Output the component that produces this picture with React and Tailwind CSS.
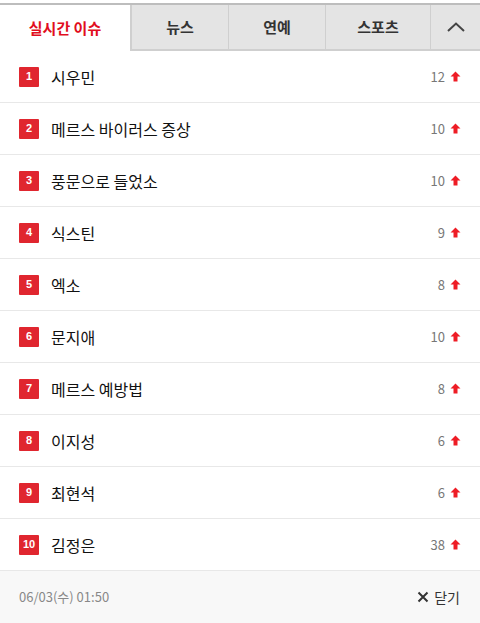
import React from "react";

const items = [
  ["시우민", 12],
  ["메르스 바이러스 증상", 10],
  ["풍문으로 들었소", 10],
  ["식스틴", 9],
  ["엑소", 8],
  ["문지애", 10],
  ["메르스 예방법", 8],
  ["이지성", 6],
  ["최현석", 6],
  ["김정은", 38],
];

const font = { fontFamily: '"Noto Sans CJK KR", "Noto Sans", sans-serif' };

function UpArrow() {
  return (
    <svg width="11" height="11" viewBox="0 0 11 11" className="ml-[5px]">
      <path d="M5.5 0.5 L10.5 5.5 L7.5 5.5 L7.5 10.5 L3.5 10.5 L3.5 5.5 L0.5 5.5 Z" fill="#ee1c25" />
    </svg>
  );
}

export default function App() {
  return (
    <div className="w-[480px] h-[623px] bg-white flex flex-col overflow-hidden" style={font}>
      <div className="pt-[3px] bg-white">
        <div className="flex h-[48px] border-t-2 border-[#bdbdbd]">
          <div className="w-[130px] flex items-center justify-center bg-white text-[#e10d20] text-[15px] font-bold">
            실시간 이슈
          </div>
          <div className="w-[98px] flex items-center justify-center bg-[#e4e4e4] border-l-2 border-b-2 border-[#cfcfcf] text-[#333] text-[15px] font-bold">
            뉴스
          </div>
          <div className="w-[97px] flex items-center justify-center bg-[#e4e4e4] border-l border-b-2 border-[#cfcfcf] text-[#333] text-[15px] font-bold">
            연예
          </div>
          <div className="w-[105px] flex items-center justify-center bg-[#e4e4e4] border-l border-b-2 border-[#cfcfcf] text-[#333] text-[15px] font-bold">
            스포츠
          </div>
          <div className="flex-1 flex items-center justify-center bg-[#e4e4e4] border-l border-b-2 border-[#cfcfcf]">
            <svg width="20" height="12" viewBox="0 0 20 12">
              <path d="M2 10 L10 2.5 L18 10" stroke="#444" strokeWidth="2" fill="none" />
            </svg>
          </div>
        </div>
      </div>
      <div className="flex flex-col">
        {items.map(([name, n], i) => (
          <div key={i} className="h-[52px] flex items-center border-b border-[#e8e8e8] pl-[19px] pr-[19px]">
            <div className="w-[20px] h-[20px] bg-[#e0262f] rounded-[1px] flex items-center justify-center text-white text-[11px] font-bold" style={{ fontFamily: '"Liberation Sans", sans-serif' }}>
              {i + 1}
            </div>
            <div className="ml-[12px] text-[16px] text-[#111] flex-1">{name}</div>
            <div className="flex items-center text-[13px] text-[#777]">
              {n}
              <UpArrow />
            </div>
          </div>
        ))}
      </div>
      <div className="flex-1 bg-[#f8f8f8] flex items-center justify-between pl-[19px] pr-[20px]">
        <div className="text-[13px] text-[#888]">06/03(수) 01:50</div>
        <div className="flex items-center text-[14px] text-[#333]">
          <svg width="12" height="12" viewBox="0 0 12 12" className="mr-[5px]">
            <path d="M1.5 1.5 L10.5 10.5 M10.5 1.5 L1.5 10.5" stroke="#333" strokeWidth="2" />
          </svg>
          닫기
        </div>
      </div>
    </div>
  );
}
